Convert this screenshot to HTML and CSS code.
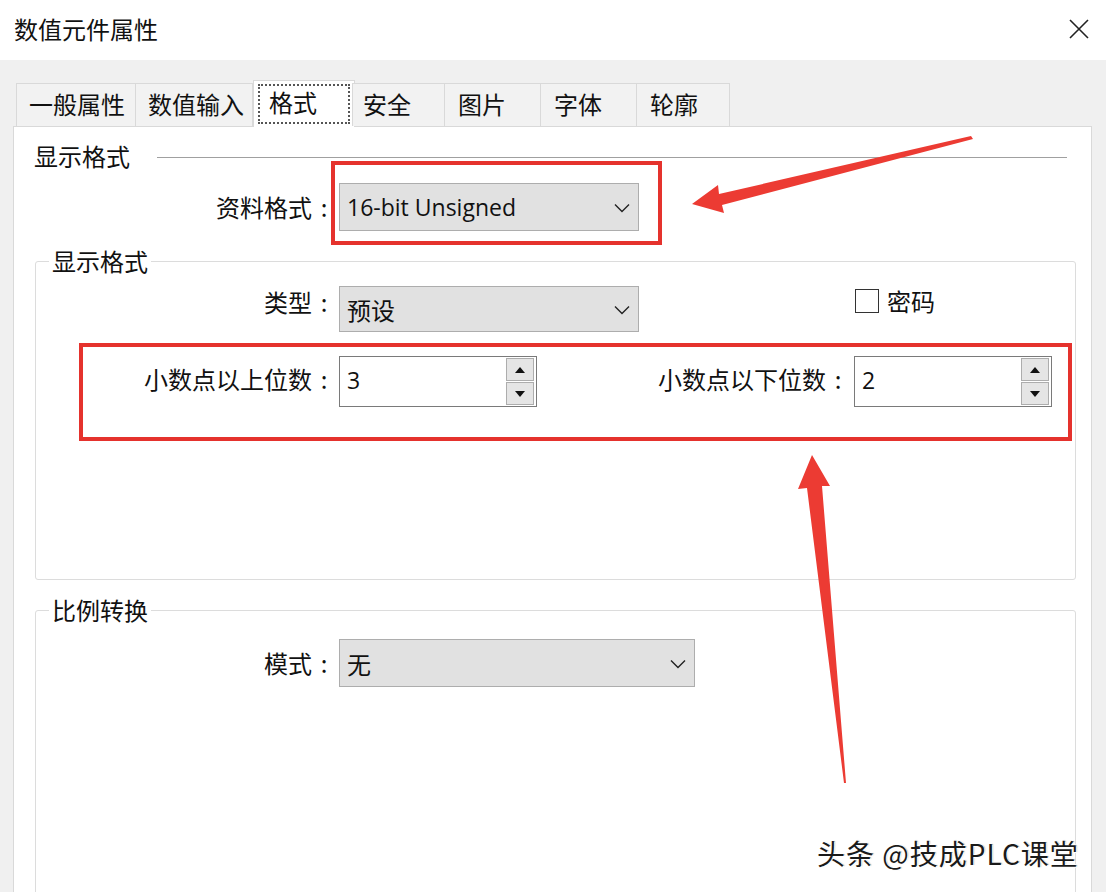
FILE: index.html
```html
<!DOCTYPE html>
<html lang="zh-CN">
<head>
<meta charset="utf-8">
<title>数值元件属性</title>
<link rel="stylesheet" href="styles.css">
</head>
<body>
<div class="dialog">
  <div class="titlebar">
    <span class="title">数值元件属性</span>
    <svg class="close" width="22" height="22" viewBox="0 0 22 22"><path d="M2 2 L20 20 M20 2 L2 20" stroke="#222" stroke-width="1.6" fill="none"/></svg>
  </div>
  <div class="body">
    <div class="tabs">
      <div class="tab t1">一般属性</div>
      <div class="tab t2">数值输入</div>
      <div class="tab active"><span class="focus">格式</span></div>
      <div class="tab t4">安全</div>
      <div class="tab t5">图片</div>
      <div class="tab t6">字体</div>
      <div class="tab t7">轮廓</div>
    </div>
    <div class="panel">
      <div class="section-head"><span>显示格式</span></div>
      <div class="row top-row">
        <label class="lbl">资料格式<span class="colon">:</span></label>
        <div class="select w300"><span class="latin">16-bit Unsigned</span><svg class="chev" width="16" height="10" viewBox="0 0 16 10"><path d="M1 1.5 L8 8.5 L15 1.5" stroke="#222" stroke-width="1.4" fill="none"/></svg></div>
      </div>
      <fieldset class="group g1">
        <legend>显示格式</legend>
        <div class="row type-row">
          <label class="lbl in">类型<span class="colon">:</span></label>
          <div class="select w300"><span>预设</span><svg class="chev" width="16" height="10" viewBox="0 0 16 10"><path d="M1 1.5 L8 8.5 L15 1.5" stroke="#222" stroke-width="1.4" fill="none"/></svg></div>
          <div class="check"><span class="box"></span><span>密码</span></div>
        </div>
        <div class="row spin-row">
          <label class="lbl in">小数点以上位数<span class="colon">:</span></label>
          <div class="spin"><span class="latin">3</span>
            <div class="spin-btns">
              <div class="sb"><svg width="12" height="8" viewBox="0 0 12 8"><path d="M6 1 L11 7 L1 7 Z" fill="#111"/></svg></div>
              <div class="sb"><svg width="12" height="8" viewBox="0 0 12 8"><path d="M1 1 L11 1 L6 7 Z" fill="#111"/></svg></div>
            </div>
          </div>
          <label class="lbl lbl2">小数点以下位数<span class="colon">:</span></label>
          <div class="spin"><span class="latin">2</span>
            <div class="spin-btns">
              <div class="sb"><svg width="12" height="8" viewBox="0 0 12 8"><path d="M6 1 L11 7 L1 7 Z" fill="#111"/></svg></div>
              <div class="sb"><svg width="12" height="8" viewBox="0 0 12 8"><path d="M1 1 L11 1 L6 7 Z" fill="#111"/></svg></div>
            </div>
          </div>
        </div>
      </fieldset>
      <fieldset class="group g2">
        <legend>比例转换</legend>
        <div class="row mode-row">
          <label class="lbl in">模式<span class="colon">:</span></label>
          <div class="select w356"><span>无</span><svg class="chev" width="16" height="10" viewBox="0 0 16 10"><path d="M1 1.5 L8 8.5 L15 1.5" stroke="#222" stroke-width="1.4" fill="none"/></svg></div>
        </div>
      </fieldset>
    </div>
  </div>
  <svg class="annot" width="1106" height="892" viewBox="0 0 1106 892">
    <rect x="333" y="163" width="327" height="80" fill="none" stroke="#e5322d" stroke-width="4"/>
    <rect x="81" y="345" width="989" height="94" fill="none" stroke="#e5322d" stroke-width="4"/>
    <polygon points="692,204 718,185 719,194 971,136 973,139 722,205 724,213" fill="#ec3b33"/>
    <polygon points="812,455 830,486 822,486 846,783 844,783 807,488 798,489" fill="#ec3b33"/>
  </svg>
  <div class="watermark">头条 @技成PLC课堂</div>
</div>
</body>
</html>
```
FILE: styles.css
```css
* { box-sizing: border-box; }
html, body { margin: 0; padding: 0; }
body {
  width: 1106px;
  height: 892px;
  overflow: hidden;
  background: #f0f0f0;
  font-family: "Noto Sans CJK SC", "Noto Sans", sans-serif;
  font-size: 24px;
  color: #111;
}
.dialog { position: relative; width: 1106px; height: 892px; overflow: hidden; }
.titlebar {
  height: 60px;
  background: #fff;
  display: flex;
  align-items: center;
  justify-content: space-between;
  padding: 0 16px 2px 14px;
}
.title { font-size: 24px; line-height: 32px; }
.close { display: block; }
.body { padding-top: 20px; }
.tabs {
  display: flex;
  align-items: flex-end;
  padding-left: 16px;
  height: 46px;
  position: relative;
  z-index: 2;
}
.tab {
  height: 43px;
  background: #f2f2f2;
  border: 1px solid #d9d9d9;
  border-bottom: none;
  line-height: 40px;
  padding-left: 11px;
  margin-right: -1px;
}
.t1 { width: 120px; padding-left: 12px; }
.t2 { width: 118px; padding-left: 12px; }
.t4 { width: 93px; padding-left: 10px; margin-left: -2px; }
.t5 { width: 97px; padding-left: 13px; }
.t6 { width: 97px; padding-left: 13px; }
.t7 { width: 94px; padding-left: 13px; }
.tab.active {
  width: 102px;
  height: 47px;
  background: #fff;
  margin-left: 1px;
  margin-bottom: -1px;
  padding: 3px 4px 4px 4px;
  line-height: 36px;
}
.focus {
  display: block;
  height: 40px;
  border: 2px dotted #555;
  padding-left: 9px;
  line-height: 32px;
}
.panel {
  margin-left: 13px;
  width: 1079px;
  height: 780px;
  background: #fff;
  border: 1px solid #d9d9d9;
  padding: 13px 15px 0 0;
}
.section-head {
  display: flex;
  align-items: center;
  padding-left: 20px;
  line-height: 32px;
  padding-right: 9px;
}
.section-head::after {
  content: "";
  flex: 1;
  height: 1px;
  background: #a0a0a0;
  margin-left: 27px;
  margin-top: 2px;
}
.row { display: flex; align-items: center; }
.lbl { text-align: right; line-height: 32px; white-space: nowrap; }
.colon { display: inline-block; width: 24px; text-align: center; }
.top-row { margin-top: 11px; }
.top-row .lbl { width: 322px; margin-right: 3px; }
.lbl.in { width: 300px; margin-right: 3px; }
.select {
  height: 48px;
  background: #e1e1e1;
  border: 1px solid #adadad;
  display: flex;
  align-items: center;
  justify-content: space-between;
  padding: 0 8px 0 7px;
}
.w300 { width: 300px; }
.w356 { width: 356px; }
.latin { font-family: "Open Sans", "Noto Sans", sans-serif; font-size: 23px; }
.chev { display: block; margin-top: 2px; }
.group {
  margin: 14px 0 0 21px;
  padding: 0;
  border: 1px solid #dcdcdc;
  border-radius: 3px;
  min-width: 0;
}
.group legend {
  margin-left: 13px;
  padding: 0 3px;
  line-height: 32px;
}
.g1 { padding-bottom: 172px; }
.g2 { margin-top: 14px; padding-bottom: 300px; }
.type-row { margin-top: 9px; align-items: flex-start; }
.type-row .select { height: 46px; }
.check {
  display: flex;
  align-items: center;
  margin-left: 216px;
  margin-top: -1px;
  line-height: 32px;
}
.box {
  width: 24px;
  height: 24px;
  border: 1.5px solid #333;
  background: #fff;
  margin-right: 8px;
}
.spin-row { margin-top: 24px; }
.spin-row .lbl { margin-top: -5px; }
.spin {
  width: 198px;
  height: 51px;
  background: #fff;
  border: 1px solid #7a7a7a;
  display: flex;
  align-items: center;
  justify-content: space-between;
  padding: 0 2px 0 7px;
}
.spin .latin { margin-top: -4px; }
.spin-btns { display: flex; flex-direction: column; gap: 1px; }
.sb {
  width: 28px;
  height: 23px;
  background: #e5e5e5;
  border: 1px solid #adadad;
  display: flex;
  align-items: center;
  justify-content: center;
}
.sb svg { display: block; }
.lbl2 { width: 196px; margin-left: 117px; margin-right: 4px; }
.mode-row { margin-top: 13px; }
.annot { position: absolute; left: 0; top: 0; pointer-events: none; }
.watermark {
  position: absolute;
  left: 817px;
  top: 836px;
  font-size: 28px;
  letter-spacing: 1px;
  line-height: 34px;
  color: #1a1a1a;
  text-shadow: 1px 1px 0 #fff, -1px 0 0 #fff, 0 -1px 0 #fff, 1px 0 1px rgba(0,0,0,0.35);
  white-space: nowrap;
}
```
